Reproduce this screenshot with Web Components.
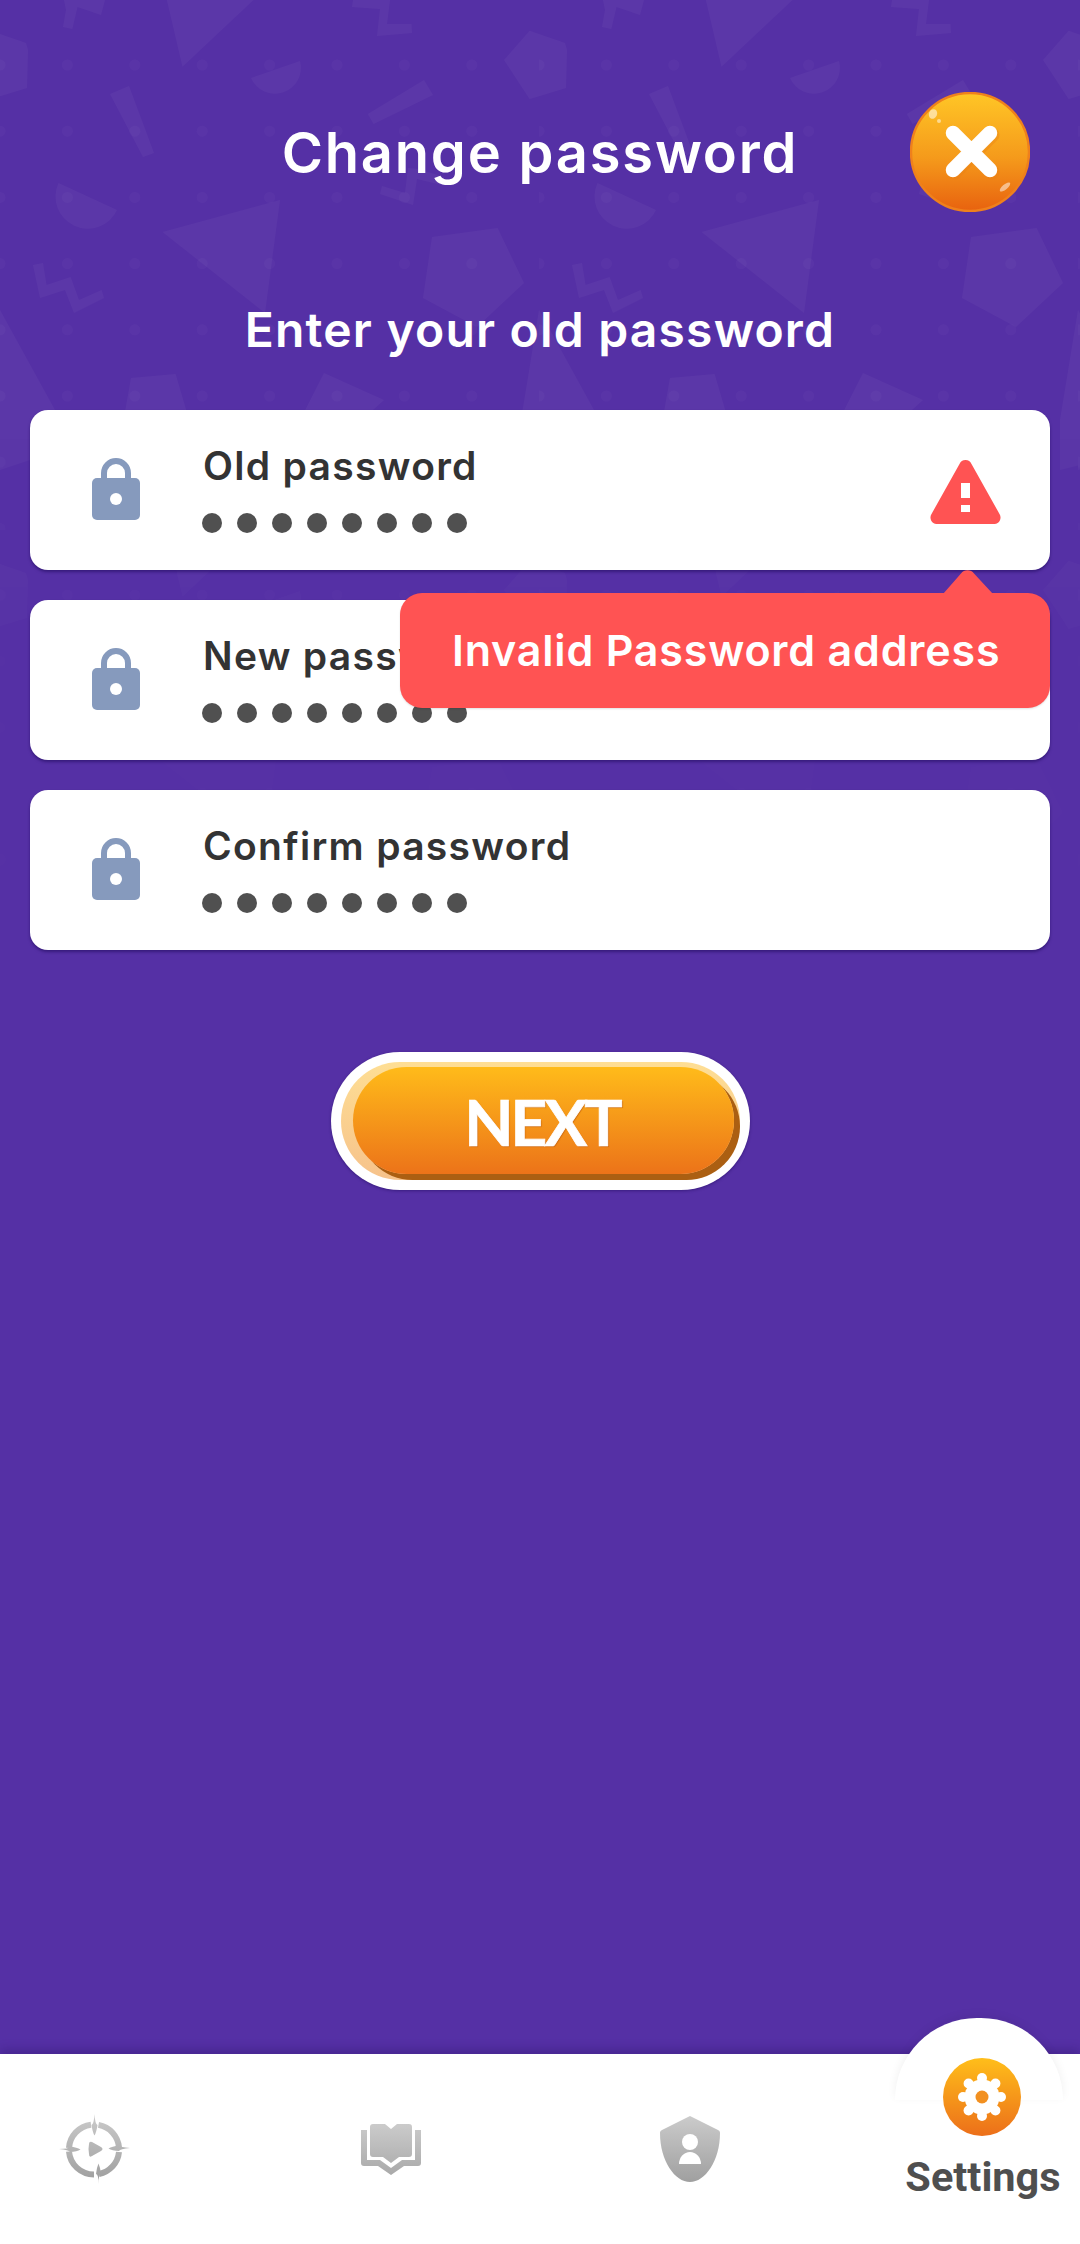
<!DOCTYPE html>
<html lang="en"><head><meta charset="utf-8"><title>Change password</title>
<style>
html,body{margin:0;padding:0;background:#5530a5}
body{width:1080px;height:2244px;overflow:hidden}
</style></head>
<body>
<app-screen>
  <app-header slot="header">Change password</app-header>
  <app-subtitle slot="header">Enter your old password</app-subtitle>
  <pw-field slot="fields" error>Old password<err-tip slot="tip">Invalid Password address</err-tip></pw-field>
  <pw-field slot="fields">New password</pw-field>
  <pw-field slot="fields">Confirm password</pw-field>
  <next-button slot="action">NEXT</next-button>
  <bottom-nav slot="nav">
    <nav-item icon="compass"></nav-item>
    <nav-item icon="book"></nav-item>
    <nav-item icon="shield"></nav-item>
    <nav-item icon="gear" active>Settings</nav-item>
  </bottom-nav>
</app-screen>
<script>
const FONT='Inter,Lato,"Noto Sans",sans-serif';
function def(name,html,init){
  customElements.define(name,class extends HTMLElement{
    constructor(){super();const r=this.attachShadow({mode:'open'});r.innerHTML=typeof html==='function'?html(this):html;}
    connectedCallback(){init&&init(this)}
  });
}
const shapes=`
<polygon points="165,-8 262,-8 182.5,66.7"/>
<polygon points="504,60 529.6,30.7 565,43 567,50 566,88 529.6,99"/>
<polygon points="-35,60 -9.4,30.7 26,43 28,50 27,88 -9.4,99"/>
<path d="M251 78 L300 61 A26 26 0 0 1 251 78Z"/>
<polygon points="367.8,114 424,80 433,95 373.6,124"/>
<polygon points="110,94 129,86 154,153 143,157"/>
<path d="M58.5 183 L117 210 A32.2 32.2 0 0 1 58.5 183Z"/>
<polygon points="162.5,232 280,200 265,313"/>
<polygon points="353,0 390,0 387,24 411.5,24 412,33 377,36 380,9 352,7"/>
<polygon points="64,0 105,0 101,15 77.5,7 72.3,29 63,27 66,10"/>
<polygon points="418,169 444,177 442,185 417,179 413,205 380,194 382,186 405,193 408,168"/>
<polygon points="33,265 43,263 46.5,285 70.6,277 79,300 101.6,290 104,298 74,313 65,290 40,298"/>
<polygon points="432,237 497.6,228 524,283 477,327 423,298"/>
<polygon points="0,310 55,410 60,450 0,470"/>
<polygon points="539,310 594,410 599,450 521,470 521,420"/>
<polygon points="131,378 175.6,374 195,440 120,440"/>
<polygon points="324,373 384,400 340,440 290,440"/>
<polygon points="230,480 262,470 290,520 240,530"/>
<polygon points="400,480 440,470 470,515 410,530"/>`;
let dots='';
for(let y=65;y<530;y+=66.2)for(let x=0;x<539;x+=67.4)dots+=`<circle cx="${x}" cy="${y}" r="5.5"/>`;
def('bg-pattern',`<style>:host{position:absolute;left:0;top:0;width:1080px;height:1100px;display:block;pointer-events:none;
-webkit-mask-image:linear-gradient(#000 0,#000 420px,rgba(0,0,0,.4) 620px,transparent 1000px);mask-image:linear-gradient(#000 0,#000 420px,rgba(0,0,0,.4) 620px,transparent 1000px)}
svg{display:block}</style>
<svg width="1080" height="1100"><defs><pattern id="p" width="539" height="530" patternUnits="userSpaceOnUse"><g fill="#fff" fill-opacity=".035">${shapes}</g><g fill="#fff" fill-opacity=".025">${dots}</g></pattern></defs><rect width="1080" height="1100" fill="url(#p)"/></svg>`);

def('app-screen',`<style>:host{display:flex;flex-direction:column;position:relative;width:1080px;height:2244px;background:#5530a5;font-family:${FONT}}
main{flex:1;position:relative;display:flex;flex-direction:column;padding-top:92px;box-sizing:border-box;min-height:0}
.head{position:relative;display:flex;flex-direction:column}
.fields{position:relative;display:flex;flex-direction:column;gap:30px;padding:0 30px;margin-top:56px}
.action{position:relative;display:flex;justify-content:center;margin-top:102px}
</style>
<main><bg-pattern></bg-pattern>
<div class="head"><slot name="header"></slot></div>
<div class="fields"><slot name="fields"></slot></div>
<div class="action"><slot name="action"></slot></div>
</main><slot name="nav"></slot>`);

def('close-button',`<style>:host{display:block;width:120px;height:120px}svg{display:block}</style>
<svg width="120" height="120" viewBox="0 0 120 120" role="img" aria-label="Close"><defs>
<linearGradient id="g" x1="0" y1="0" x2="0" y2="1"><stop offset="0" stop-color="#ffc626"/><stop offset=".55" stop-color="#f59a1b"/><stop offset="1" stop-color="#e8620f"/></linearGradient></defs>
<circle cx="60" cy="60" r="59" fill="url(#g)" stroke="#ef801c" stroke-width="2.4"/>
<path d="M43 41 80 78M80 41 43 78" stroke="#e97f14" stroke-opacity=".35" stroke-width="15" stroke-linecap="round" transform="translate(2 2)"/>
<path d="M43 41 80 78M80 41 43 78" stroke="#fff" stroke-width="14.5" stroke-linecap="round"/>
<ellipse cx="23" cy="22" rx="4" ry="5" transform="rotate(25 23 22)" fill="#fff" fill-opacity=".55"/>
<circle cx="29" cy="29" r="2" fill="#fff" fill-opacity=".5"/>
<ellipse cx="95" cy="95" rx="2.5" ry="6.5" transform="rotate(50 95 95)" fill="#fff" fill-opacity=".5"/>
</svg>`);

def('app-header',`<style>:host{display:grid;grid-template-columns:170px 1fr 170px;align-items:center;height:120px;box-sizing:border-box}
h1{grid-column:2;margin:2px 0 0;font:600 56px/1 ${FONT};color:#fff;letter-spacing:1.8px;white-space:nowrap;text-align:center}
close-button{grid-column:3;justify-self:start}</style><h1><slot></slot></h1><close-button></close-button>`);

def('app-subtitle',`<style>:host{display:block;text-align:center;margin-top:94px;font:600 48px/1 ${FONT};color:#fff;letter-spacing:1.2px;white-space:nowrap}</style><slot></slot>`);

const lock=`<svg width="48" height="62" viewBox="0 0 48 62"><path d="M12 22V15a12 12 0 0 1 24 0v7" fill="none" stroke="#869abd" stroke-width="6"/><rect y="20" width="48" height="42" rx="5" fill="#869abd"/><circle cx="24" cy="41" r="6" fill="#fff"/></svg>`;
const warn=`<svg width="71" height="64" viewBox="0 0 71 64"><path d="M29.500 4a6.500 6.500 0 0 1 12 0l28 50a6.500 6.500 0 0 1-5 10H6.500a6.500 6.500 0 0 1-5-10z" fill="#ff5353"/><rect x="31" y="23" width="9" height="15" fill="#fff"/><rect x="31" y="45" width="9" height="7" fill="#fff"/></svg>`;
def('pw-field',`<style>:host{position:relative;display:flex;align-items:center;height:160px;background:#fff;border-radius:18px;box-shadow:0 2px 3px rgba(30,10,90,.55);box-sizing:border-box;padding-left:62px}
:host([error]){z-index:2}
.lock{width:48px;height:62px;margin-right:62px;margin-top:-2px;flex:none}
.txt{flex:1;display:flex;flex-direction:column;min-width:0;padding-bottom:5px}
.label{font:600 39px/50px ${FONT};color:#333;letter-spacing:1.3px;white-space:nowrap;margin-top:-2px;margin-left:1px}
.dots{display:flex;gap:15px;margin-top:22px}
.dots i{width:20px;height:20px;border-radius:50%;background:#505050;display:block}
.warn{display:none;flex:none;margin-right:49px;margin-top:7px}
:host([error]) .warn{display:block}
</style><div class="lock">${lock}</div>
<div class="txt"><div class="label"><slot></slot></div><div class="dots"><i></i><i></i><i></i><i></i><i></i><i></i><i></i><i></i></div></div>
<div class="warn">${warn}</div><slot name="tip"></slot>`);

def('err-tip',`<style>:host{position:absolute;right:0;top:183px;width:650px;height:115px;background:#ff5353;border-radius:22px;display:flex;align-items:center;box-sizing:border-box;padding-left:52px;
font:600 43px/1 ${FONT};color:#fff;letter-spacing:.8px;white-space:nowrap;box-shadow:0 1px 2px rgba(0,0,0,.12)}
svg{position:absolute;right:57px;top:-23px;display:block}</style>
<svg width="50" height="25" viewBox="0 0 50 25"><path d="M0 24 18 3.500a8 8 0 0 1 13 0L50 24z" fill="#ff5353"/></svg><slot></slot>`);

def('next-button',`<style>:host{display:block;width:419px;height:138px;box-sizing:border-box;padding:10px;background:#fff;border-radius:69px;box-shadow:0 1px 3px rgba(30,10,90,.5)}
.base{height:100%;box-sizing:border-box;padding:5px 6px 6px 12px;border-radius:59px;background:linear-gradient(#fede94,#f6c28b)}
.face{height:100%;border-radius:54px;background:linear-gradient(#ffbb1a,#ec7319);box-shadow:6px 6px 0 #ab5f12;display:flex;align-items:center;justify-content:center;
font:700 64px/1 Lato,sans-serif;color:#fff;letter-spacing:-3px;-webkit-text-stroke:.7px #fff;text-shadow:1px 1px 1px rgba(190,90,10,.7);padding-top:2px;padding-right:2px;box-sizing:border-box}</style>
<div class="base"><div class="face"><slot></slot></div></div>`);

const grad=(id)=>`<defs><linearGradient id="${id}" gradientUnits="userSpaceOnUse" x1="0" y1="0" x2="0" y2="70"><stop offset="0" stop-color="#cbcbcb"/><stop offset="1" stop-color="#9d9d9d"/></linearGradient></defs>`;
const icons={
compass:`<svg width="72" height="71" viewBox="0 0 72 71">${grad('c')}<g fill="none" stroke="url(#c)" stroke-width="6"><path d="M39.500 10.900A25 25 0 0 1 60 33.500"/><path d="M60 38A25 25 0 0 1 40 60"/><path d="M35 60.500A25 25 0 0 1 10 37.500"/><path d="M10 34A25 25 0 0 1 32 10.700"/></g>
<g fill="url(#c)"><path d="M35.500 0Q36 10 38.500 11Q37.500 18 35.500 21.500Q33.500 18 32.500 11Q35 10 35.500 0Z"/><path d="M0 35Q10 35 11 32.500Q18 33.500 21.500 35.500Q18 37.500 11 38Q10 36 0 35Z"/><path d="M71 34Q61 35 60 37Q53 36.500 49.500 34.500Q53 32.500 60 31.500Q61 33 71 34Z"/><path d="M39.500 70Q39.500 60 37 60Q37.500 54 39.500 49.500Q41.500 54 42 60Q39.500 60 39.500 70Z"/><path d="M30 30Q30 27 33 28L42 33Q45 35 42 37L33 42Q30 44 30 40Q29 35 30 30Z"/></g></svg>`,
book:`<svg width="60" height="51" viewBox="0 0 60 51">${grad('b')}<g fill="url(#b)"><path d="M9 3a3 3 0 0 1 3-3h12l6 5 6-5h12a3 3 0 0 1 3 3v27a3 3 0 0 1-3 3H38l-8 6-8-6H12a3 3 0 0 1-3-3z"/><path d="M0 6H6V36H19L30 44 41 36H54V6H60V39a3 3 0 0 1-3 3H43L30 51 17 42H3a3 3 0 0 1-3-3z"/></g></svg>`,
shield:`<svg width="60" height="66" viewBox="0 0 60 66">${grad('s')}<path d="M30 0 58 14a3 3 0 0 1 2 3C60 45 45 66 30 66S0 45 0 17a3 3 0 0 1 2-3z" fill="url(#s)"/><circle cx="30" cy="26" r="8" fill="#fff"/><path d="M19 48a11 12 0 0 1 22 0z" fill="#fff"/></svg>`,
gear:`<svg width="78" height="80" viewBox="0 0 78 80"><defs><linearGradient id="o" x1="0" y1="0" x2="0" y2="1"><stop offset="0" stop-color="#ffbe1a"/><stop offset="1" stop-color="#ec6f1a"/></linearGradient></defs><circle cx="39" cy="40" r="39" fill="url(#o)"/><g fill="#fff"><circle cx="39" cy="40" r="17.500"/>${[0,45,90,135,180,225,270,315].map(a=>`<circle cx="39" cy="21" r="5" transform="rotate(${a} 39 40)"/>`).join('')}</g><circle cx="39" cy="40" r="6.500" fill="#f29020"/></svg>`};

def('bottom-nav',`<style>:host{position:relative;display:grid;grid-template-columns:repeat(4,190px);column-gap:106px;height:190px;background:#fff;box-shadow:0 -5px 9px rgba(40,15,100,.3)}</style><slot></slot>`);

def('nav-item',(el)=>{const k=el.getAttribute('icon');return `<style>:host{position:relative;display:flex;flex-direction:column;align-items:center;justify-content:center;height:190px;box-sizing:border-box}
:host([icon=shield]){padding-left:6px}
:host([active]){justify-content:flex-start}
.bub{display:none;position:absolute;left:7px;top:-36px;width:168px;height:82px;border-radius:84px 84px 0 0;background:#fff;box-shadow:0 -3px 10px rgba(0,0,0,.06)}
:host([active]) .bub{display:block}
.ic{position:relative;display:block;line-height:0}
:host([active]) .ic{margin-top:3px;margin-right:2px}
.lbl{position:relative;display:none;font:700 41.500px/1 Roboto,sans-serif;color:#4f4f4f;margin-top:19px;white-space:nowrap}
:host([active]) .lbl{display:block}
</style><div class="bub"></div><span class="ic">${icons[k]}</span><span class="lbl"><slot></slot></span>`});
</script>
</body></html>
